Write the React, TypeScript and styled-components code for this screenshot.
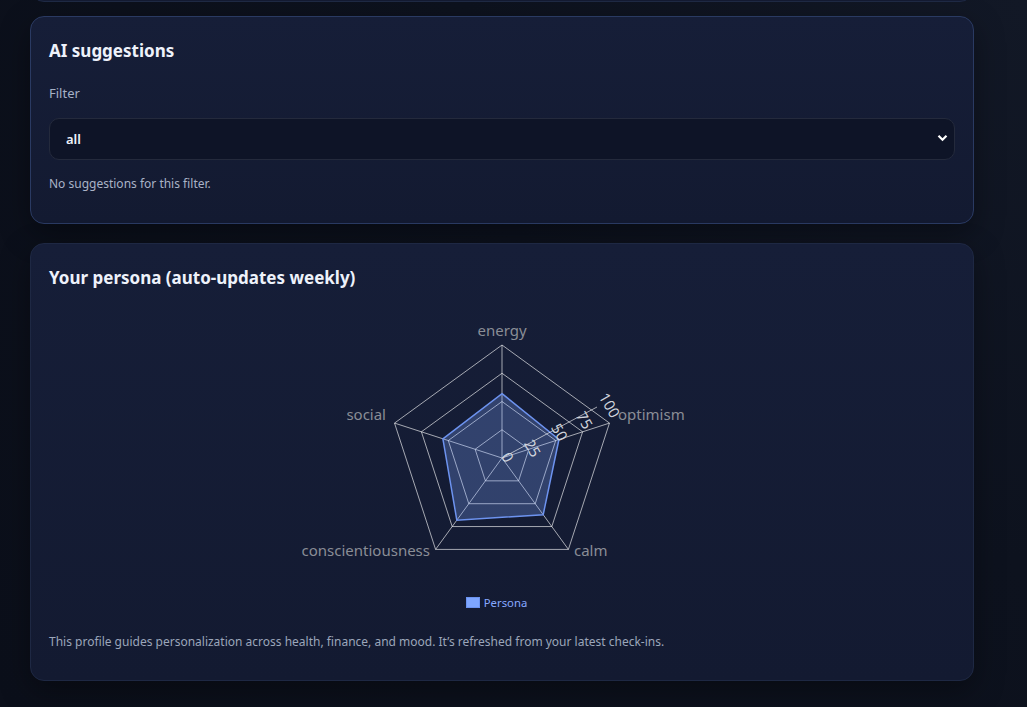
import React from "react";
import styled, { createGlobalStyle } from "styled-components";

const GlobalStyle = createGlobalStyle`
  html, body { margin: 0; padding: 0; }
  body {
    background: radial-gradient(circle at 100% 0%, #121826 0%, #0d121e 45%, #0b0f1a 100%);
    min-height: 707px;
    overflow: hidden;
    font-family: "Noto Sans", "Open Sans", sans-serif;
    color: #e8edf7;
  }
`;

const Page = styled.main`
  width: 944px;
  margin-left: 30px;
  padding-bottom: 26px;
  display: flex;
  flex-direction: column;
`;

const StubCard = styled.div`
  height: 40px;
  margin-top: -38px;
  box-sizing: border-box;
  border: 1px solid #1f2a45;
  border-radius: 14px;
  background: #141b32;
`;

const Card = styled.section<{ $gap: number; $accent?: boolean }>`
  margin-top: ${(p) => p.$gap}px;
  box-sizing: border-box;
  border: 1px solid ${(p) => (p.$accent ? "#2a3a62" : "#1e2843")};
  border-radius: 14px;
  background: linear-gradient(180deg, #161e38 0%, #131a31 100%);
  box-shadow: 0 10px 30px rgba(0, 0, 0, 0.35);
  padding: 22px 18px ${(p) => (p.$accent ? 30 : 29)}px;
  display: flex;
  flex-direction: column;
`;

const Title = styled.h2`
  margin: 0;
  font-size: 17px;
  line-height: 24px;
  font-weight: 700;
  color: #eef2fb;
`;

const FieldLabel = styled.label`
  margin-top: 21px;
  font-size: 13px;
  line-height: 18px;
  color: #a6b1c6;
`;

const SelectWrap = styled.div`
  position: relative;
  margin-top: 16px;
`;

const Select = styled.select`
  appearance: none;
  width: 100%;
  height: 42px;
  box-sizing: border-box;
  background: #0e1427;
  border: 1px solid #242a3c;
  border-radius: 10px;
  color: #eef2fb;
  font-family: inherit;
  font-size: 13px;
  font-weight: 600;
  padding: 0 16px;
  outline: none;
`;

const Chevron = styled.svg`
  position: absolute;
  right: 7px;
  top: 16px;
  pointer-events: none;
`;

const Muted = styled.p`
  margin: 15px 0 0;
  font-size: 12px;
  line-height: 18px;
  color: #a9b3c7;
`;

const ChartSvg = styled.svg`
  display: block;
  margin-top: 8px;
  width: 100%;
  height: 290px;
`;

const Legend = styled.div`
  margin-top: 6px;
  height: 16px;
  padding-right: 11px;
  display: flex;
  align-items: center;
  justify-content: center;
  gap: 4px;
  font-size: 11.3px;
  color: #86a8ff;
`;

const LegendBox = styled.span`
  width: 14px;
  height: 11px;
  box-sizing: border-box;
  background: #7ea6ff;
  border: 1px solid #6b93f0;
`;

const Footer = styled.p`
  margin: 23px 0 0;
  font-size: 12px;
  line-height: 18px;
  color: #9ba6ba;
`;

const CX = 453;
const CY = 160;
const R = 113;
const axes = [
  { name: "energy", value: 57 },
  { name: "optimism", value: 53 },
  { name: "calm", value: 62 },
  { name: "conscientiousness", value: 68 },
  { name: "social", value: 55 },
];
const angleOf = (i: number) => ((-90 + i * 72) * Math.PI) / 180;
const pt = (i: number, r: number) =>
  `${(CX + r * Math.cos(angleOf(i))).toFixed(2)},${(CY + r * Math.sin(angleOf(i))).toFixed(2)}`;

const ring = (frac: number) => axes.map((_, i) => pt(i, R * frac)).join(" ");

const labelPos: { x: number; y: number; anchor: "start" | "middle" | "end" }[] = [
  { x: 453, y: 32, anchor: "middle" },
  { x: 569, y: 116, anchor: "start" },
  { x: 525, y: 252, anchor: "start" },
  { x: 381, y: 252, anchor: "end" },
  { x: 337, y: 116, anchor: "end" },
];

const ticks = [
  { t: "0", x: 459, y: 159 },
  { t: "25", x: 484, y: 150 },
  { t: "50", x: 511, y: 134 },
  { t: "75", x: 536, y: 122 },
  { t: "100", x: 561, y: 107 },
];

function RadarChart() {
  const grid = "rgba(255,255,255,0.62)";
  return (
    <ChartSvg viewBox="0 0 906 290">
      {[0.25, 0.5, 0.75, 1].map((f) => (
        <polygon key={f} points={ring(f)} fill="none" stroke={grid} strokeWidth={1} />
      ))}
      {axes.map((_, i) => {
        const [x, y] = pt(i, R).split(",");
        return <line key={i} x1={CX} y1={CY} x2={x} y2={y} stroke={grid} strokeWidth={1} />;
      })}
      <polygon
        points={axes.map((a, i) => pt(i, (R * a.value) / 100)).join(" ")}
        fill="rgba(126,166,255,0.28)"
        stroke="#6d93ef"
        strokeWidth={1.5}
      />
      <line x1={CX} y1={CY} x2={548} y2={109} stroke={grid} strokeWidth={1} />
      {ticks.map((t) => (
        <text
          key={t.t}
          x={t.x}
          y={t.y}
          fill="#cfd3dc"
          fontSize={15}
          textAnchor="middle"
          dominantBaseline="central"
          transform={`rotate(60 ${t.x} ${t.y})`}
        >
          {t.t}
        </text>
      ))}
      {axes.map((a, i) => (
        <text
          key={a.name}
          x={labelPos[i].x}
          y={labelPos[i].y}
          fill="#8a8d96"
          fontSize={15}
          textAnchor={labelPos[i].anchor}
          dominantBaseline="central"
        >
          {a.name}
        </text>
      ))}
    </ChartSvg>
  );
}

export default function App() {
  return (
    <>
      <GlobalStyle />
      <Page>
        <StubCard />
        <Card $gap={14} $accent>
          <Title>AI suggestions</Title>
          <FieldLabel htmlFor="filter">Filter</FieldLabel>
          <SelectWrap>
            <Select id="filter" defaultValue="all">
              <option value="all">all</option>
              <option value="health">health</option>
              <option value="finance">finance</option>
              <option value="mood">mood</option>
            </Select>
            <Chevron width="11" height="8" viewBox="0 0 11 8">
              <polyline points="1.5,1.8 5.5,5.8 9.5,1.8" fill="none" stroke="#ffffff" strokeWidth="2.2" />
            </Chevron>
          </SelectWrap>
          <Muted>No suggestions for this filter.</Muted>
        </Card>
        <Card $gap={19}>
          <Title>Your persona (auto-updates weekly)</Title>
          <RadarChart />
          <Legend>
            <LegendBox />
            <span>Persona</span>
          </Legend>
          <Footer>
            This profile guides personalization across health, finance, and mood. It’s refreshed from your latest check-ins.
          </Footer>
        </Card>
      </Page>
    </>
  );
}
